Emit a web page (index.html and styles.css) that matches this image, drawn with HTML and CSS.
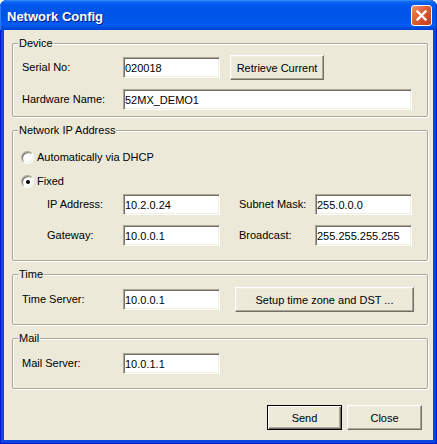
FILE: index.html
```html
<!DOCTYPE html>
<html>
<head>
<meta charset="utf-8">
<title>Network Config</title>
<link rel="stylesheet" href="styles.css">
</head>
<body>
<div class="window">
  <div class="titlebar">
    <span class="title">Network Config</span>
    <div class="close-btn">
      <svg width="19" height="19" viewBox="0 0 19 19"><path d="M5.5 5.5 L13.5 13.5 M13.5 5.5 L5.5 13.5" stroke="#fff" stroke-width="2.4" stroke-linecap="square" fill="none"/></svg>
    </div>
  </div>
  <div class="client">
    <div class="group g-device">
      <div class="legend">Device</div>
      <div class="row">
        <span class="lbl">Serial No:</span>
        <input class="field" type="text" value="020018">
        <button class="btn retrieve">Retrieve Current</button>
      </div>
      <div class="row row-next">
        <span class="lbl">Hardware Name:</span>
        <input class="field wide" type="text" value="52MX_DEMO1">
      </div>
    </div>

    <div class="group g-net">
      <div class="legend">Network IP Address</div>
      <div class="radio-row">
        <span class="radio"></span>
        <span>Automatically via DHCP</span>
      </div>
      <div class="radio-row radio-next">
        <span class="radio checked"></span>
        <span>Fixed</span>
      </div>
      <div class="subrow first">
        <span class="lbl sub">IP Address:</span>
        <input class="field" type="text" value="10.2.0.24">
        <span class="lbl sub spaced">Subnet Mask:</span>
        <input class="field" type="text" value="255.0.0.0">
      </div>
      <div class="subrow second">
        <span class="lbl sub">Gateway:</span>
        <input class="field" type="text" value="10.0.0.1">
        <span class="lbl sub spaced">Broadcast:</span>
        <input class="field" type="text" value="255.255.255.255">
      </div>
    </div>

    <div class="group g-time">
      <div class="legend">Time</div>
      <div class="row">
        <span class="lbl">Time Server:</span>
        <input class="field" type="text" value="10.0.0.1">
        <button class="btn setup">Setup time zone and DST ...</button>
      </div>
    </div>

    <div class="group g-mail">
      <div class="legend">Mail</div>
      <div class="row">
        <span class="lbl">Mail Server:</span>
        <input class="field" type="text" value="10.0.1.1">
      </div>
    </div>

    <div class="footer">
      <button class="btn action default">Send</button>
      <button class="btn action">Close</button>
    </div>
  </div>
</div>
</body>
</html>
```
FILE: styles.css
```css
* {
  box-sizing: border-box;
}

html,
body {
  margin: 0;
  padding: 0;
  background: #ffffff;
}

body {
  font-family: "Liberation Sans", Arial, sans-serif;
  font-size: 11px;
  color: #000000;
}

.window {
  width: 437px;
  height: 444px;
  display: flex;
  flex-direction: column;
  background: #0a46e0;
  border-radius: 7px 7px 0 0;
  overflow: hidden;
  box-shadow: inset 1px 0 0 #0019cf, inset -1px 0 0 #0019cf, inset 0 -1px 0 #0019cf;
}

.titlebar {
  height: 30px;
  flex: none;
  display: flex;
  justify-content: space-between;
  align-items: flex-start;
  padding: 0 5px 0 7px;
  background: linear-gradient(to bottom,
    #3d8ff5 0px,
    #0b68f2 2px,
    #0058ee 5px,
    #0054e6 14px,
    #0058ee 22px,
    #005df6 25px,
    #004bdc 28px,
    #0040d2 30px);
  box-shadow: inset 1px 0 0 #2c7bf5, inset -1px 0 0 #0038c8;
}

.title {
  margin-top: 5px;
  line-height: 24px;
  font-size: 13px;
  font-weight: bold;
  color: #ffffff;
  text-shadow: 1px 1px 0 #0a1883;
  white-space: nowrap;
}

.close-btn {
  margin-top: 5px;
  width: 21px;
  height: 21px;
  border: 1px solid #ffffff;
  border-radius: 3px;
  background: linear-gradient(135deg, #f0906c 0%, #e2603a 40%, #cf4a23 75%, #c0421f 100%);
  display: flex;
  align-items: center;
  justify-content: center;
}

.close-btn svg {
  display: block;
}

.client {
  flex: 1;
  margin: 0 4px 4px;
  background: #ece9d8;
  padding: 13px 5px 0 8px;
  display: flex;
  flex-direction: column;
  gap: 13px;
}

.group {
  border: 1px solid #aca899;
  border-radius: 2px;
  box-shadow: inset 1px 1px 0 #ffffff, 1px 1px 0 #ffffff;
  padding-left: 9px;
}

.legend {
  height: 13px;
  line-height: 13px;
  margin: -7px 0 0 -4px;
  padding: 0 1px;
  background: #ece9d8;
  width: max-content;
  white-space: nowrap;
}

.g-device {
  padding-bottom: 6px;
}

.g-device .legend {
  margin-bottom: 5px;
}

.g-net {
  padding-bottom: 14px;
}

.g-net .legend {
  margin-bottom: 14px;
}

.g-time {
  padding-bottom: 12px;
}

.g-time .legend {
  margin-bottom: 6px;
}

.g-mail {
  padding-bottom: 14px;
}

.g-mail .legend {
  margin-bottom: 8px;
}

.row {
  display: flex;
  align-items: center;
}

.row-next {
  margin-top: 9px;
}

.lbl {
  width: 101px;
  flex: none;
  white-space: nowrap;
  line-height: 13px;
}

.lbl.sub {
  width: 76px;
}

.lbl.spaced {
  margin-left: 19px;
}

.field {
  width: 97px;
  height: 21px;
  flex: none;
  margin: 0;
  padding: 0 1px;
  font-family: "Liberation Sans", Arial, sans-serif;
  font-size: 11px;
  color: #000000;
  background: #ffffff;
  border: 1px solid;
  border-color: #aca899 #ffffff #ffffff #aca899;
  box-shadow: inset 1px 1px 0 #716f64, inset -1px -1px 0 #f1efe2;
  outline: none;
}

.field.wide {
  width: 289px;
}

.btn {
  height: 25px;
  flex: none;
  margin: 0;
  padding: 0;
  font-family: "Liberation Sans", Arial, sans-serif;
  font-size: 11px;
  font-weight: normal;
  color: #000000;
  background: #ece9d8;
  border: 1px solid;
  border-color: #ffffff #716f64 #716f64 #ffffff;
  box-shadow: inset -1px -1px 0 #aca899, inset 1px 1px 0 #f1efe2;
  white-space: nowrap;
}

.btn.default {
  border-color: #000000;
  box-shadow: inset 1px 1px 0 #ffffff, inset -1px -1px 0 #716f64, inset -2px -2px 0 #aca899;
}

.retrieve {
  margin-left: 10px;
  width: 94px;
}

.setup {
  margin-left: 15px;
  width: 179px;
}

.radio-row {
  display: flex;
  align-items: center;
  height: 13px;
  line-height: 13px;
  margin-left: -1px;
}

.radio-next {
  margin-top: 11px;
}

.radio {
  width: 13px;
  height: 13px;
  flex: none;
  margin-right: 3px;
  border-radius: 50%;
  background: #ffffff;
  border: 1px solid;
  border-color: #aca899 #ffffff #ffffff #aca899;
  box-shadow: inset 1px 1px 0 #716f64, inset -1px -1px 0 #f1efe2;
  display: flex;
  align-items: center;
  justify-content: center;
}

.radio.checked::after {
  content: "";
  width: 4px;
  height: 4px;
  border-radius: 50%;
  background: #000000;
}

.subrow {
  display: flex;
  align-items: center;
  padding-left: 25px;
}

.subrow.first {
  margin-top: 6px;
}

.subrow.second {
  margin-top: 10px;
}

.footer {
  display: flex;
  justify-content: flex-end;
  gap: 5px;
  margin-top: 3px;
  margin-right: 6px;
}

.action {
  width: 75px;
}
```
